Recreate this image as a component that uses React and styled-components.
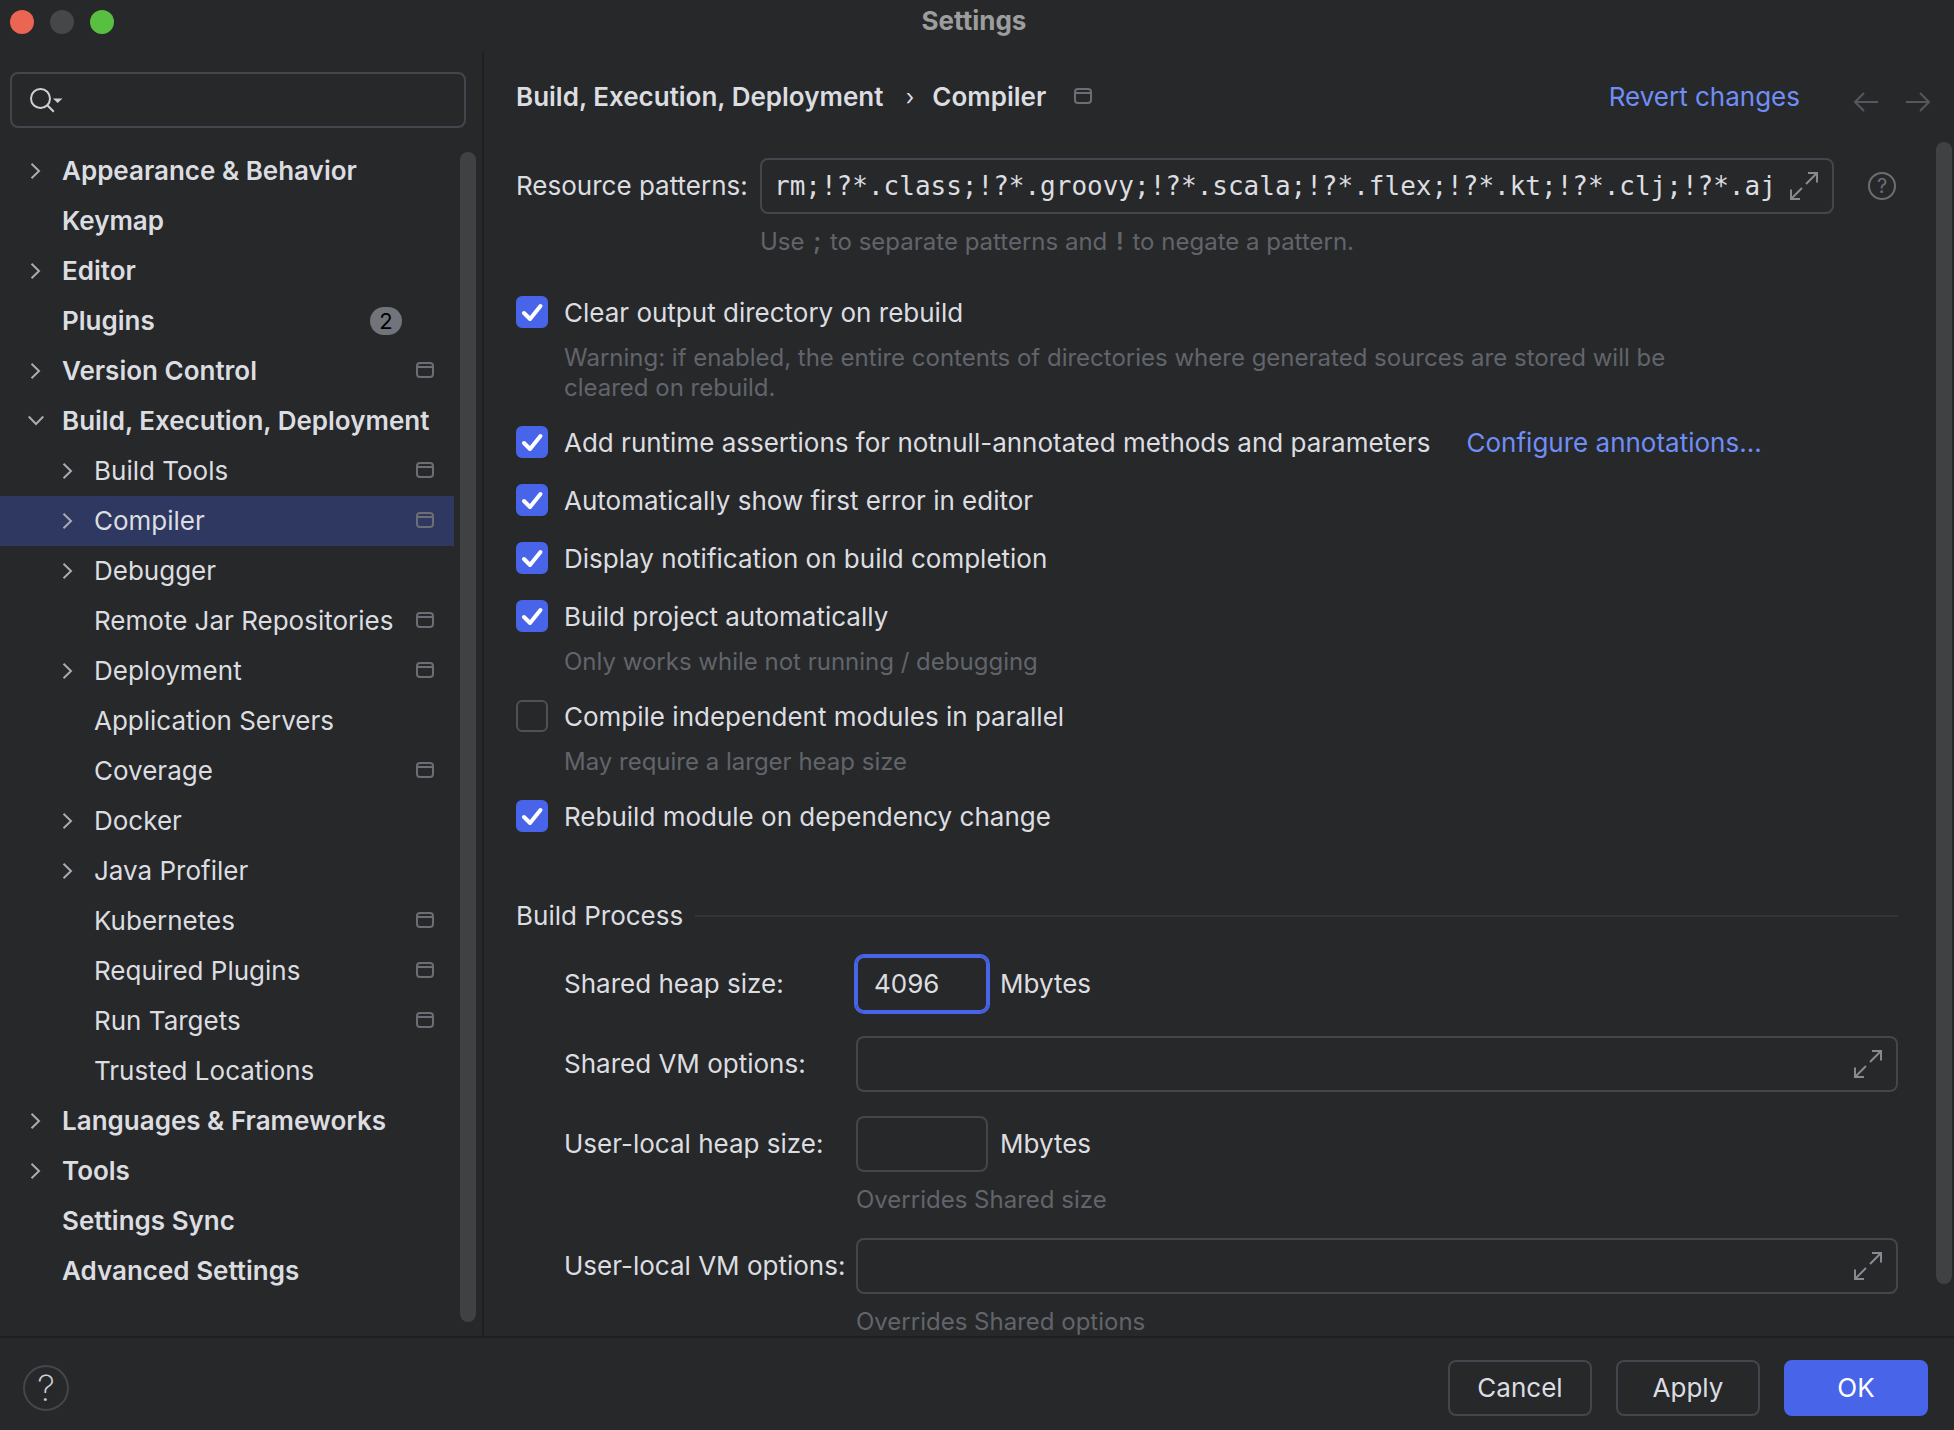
import React, { useState } from "react";
import styled, { createGlobalStyle, css } from "styled-components";

const TREE = [
  { label: "Appearance & Behavior", arrow: "right" },
  { label: "Keymap" },
  { label: "Editor", arrow: "right" },
  { label: "Plugins", badge: 2 },
  { label: "Version Control", arrow: "right", project: true },
  { label: "Build, Execution, Deployment", arrow: "down" },
  { label: "Build Tools", child: true, arrow: "right", project: true },
  { label: "Compiler", child: true, arrow: "right", project: true },
  { label: "Debugger", child: true, arrow: "right" },
  { label: "Remote Jar Repositories", child: true, project: true },
  { label: "Deployment", child: true, arrow: "right", project: true },
  { label: "Application Servers", child: true },
  { label: "Coverage", child: true, project: true },
  { label: "Docker", child: true, arrow: "right" },
  { label: "Java Profiler", child: true, arrow: "right" },
  { label: "Kubernetes", child: true, project: true },
  { label: "Required Plugins", child: true, project: true },
  { label: "Run Targets", child: true, project: true },
  { label: "Trusted Locations", child: true },
  { label: "Languages & Frameworks", arrow: "right" },
  { label: "Tools", arrow: "right" },
  { label: "Settings Sync" },
  { label: "Advanced Settings" },
];

const OPTIONS = [
  {
    id: "clear",
    label: "Clear output directory on rebuild",
    hint: "Warning: if enabled, the entire contents of directories where generated sources are stored will be cleared on rebuild.",
    checked: true,
  },
  {
    id: "assertions",
    label: "Add runtime assertions for notnull-annotated methods and parameters",
    link: "Configure annotations...",
    checked: true,
  },
  { id: "first-error", label: "Automatically show first error in editor", checked: true },
  { id: "notify", label: "Display notification on build completion", checked: true },
  {
    id: "auto-build",
    label: "Build project automatically",
    hint: "Only works while not running / debugging",
    checked: true,
  },
  {
    id: "parallel",
    label: "Compile independent modules in parallel",
    hint: "May require a larger heap size",
    checked: false,
  },
  { id: "rebuild", label: "Rebuild module on dependency change", checked: true },
];

const ChevronIcon = ({ direction }) => (
  <svg width="16" height="16" viewBox="0 0 16 16" fill="none" stroke="#a9abb3" strokeWidth="2">
    {direction === "right" && <path d="M3.5 0.7 11 8l-7.500 7.300" />}
    {direction === "down" && <path d="M0.700 3.500 8 11l7.300-7.500" />}
  </svg>
);

const ProjectIcon = () => (
  <svg width="18" height="18" viewBox="0 0 18 18" fill="none" stroke="#6c6e75" strokeWidth="2">
    <rect x="1" y="1" width="16" height="14" rx="3" />
    <path d="M1 5h16" />
  </svg>
);

const SearchIcon = () => (
  <svg width="34" height="26" viewBox="0 0 34 26" fill="none" stroke="#ced0d6" strokeWidth="2">
    <circle cx="10.500" cy="11.500" r="9.500" />
    <path d="m17.300 18.300 6.500 6.500" />
    <path d="M23 11.500h9.500L27.700 16z" fill="#ced0d6" stroke="none" />
  </svg>
);

const ExpandIcon = () => (
  <svg width="28" height="28" viewBox="0 0 28 28" fill="none" stroke="#868a91" strokeWidth="2">
    <path d="M18 1H27v9.500M27 1 16 12M10 27H1v-9.500M1 27l11-11" />
  </svg>
);

const ArrowIcon = ({ flip }) => (
  <svg width="24" height="20" viewBox="0 0 24 20" fill="none" stroke="#55575c" strokeWidth="2">
    <path d={flip ? "M0 10h23M14 1l9 9-9 9" : "M24 10H1M10 1l-9 9 9 9"} />
  </svg>
);

const CheckMark = () => (
  <svg
    width="32"
    height="32"
    viewBox="0 0 32 32"
    fill="none"
    stroke="#fff"
    strokeWidth="4"
    strokeLinecap="round"
    strokeLinejoin="round"
  >
    <path d="m8 17 6 6L24.500 10" />
  </svg>
);

const Option = ({ option }) => {
  const [checked, setChecked] = useState(option.checked);

  return (
    <OptionItem>
      <OptionRow>
        <OptionLabel htmlFor={option.id}>
          <CheckBox>
            <input
              type="checkbox"
              id={option.id}
              checked={checked}
              onChange={() => setChecked(!checked)}
            />
            {checked && <CheckMark />}
          </CheckBox>
          {option.label}
        </OptionLabel>
        {option.link && <Link href="#annotations">{option.link}</Link>}
      </OptionRow>
      {option.hint && <OptionHint>{option.hint}</OptionHint>}
    </OptionItem>
  );
};

const App = () => {
  const [selected, setSelected] = useState("Compiler");
  const [patterns, setPatterns] = useState(
    "rm;!?*.class;!?*.groovy;!?*.scala;!?*.flex;!?*.kt;!?*.clj;!?*.aj"
  );
  const [heap, setHeap] = useState("4096");

  return (
    <Window>
      <GlobalStyle />
      <TitleBar>
        <Lights>
          <Light $color="#ea6552" aria-label="Close" />
          <Light $color="#464749" aria-label="Minimize" />
          <Light $color="#58c041" aria-label="Zoom" />
        </Lights>
        <WindowTitle>Settings</WindowTitle>
      </TitleBar>

      <Panes>
        <Sidebar>
          <Search>
            <SearchIcon />
            <input type="search" aria-label="Search settings" />
          </Search>
          <TreeArea>
            <Tree>
              {TREE.map((item) => (
                <li key={item.label}>
                  <TreeRow
                    $child={item.child}
                    $selected={selected === item.label}
                    onClick={() => setSelected(item.label)}
                  >
                    <ChevronIcon direction={item.arrow} />
                    <TreeText>{item.label}</TreeText>
                    {item.badge && <Badge>{item.badge}</Badge>}
                    {item.project && <ProjectIcon />}
                  </TreeRow>
                </li>
              ))}
            </Tree>
            <TreeThumb />
          </TreeArea>
        </Sidebar>

        <Main>
          <Header>
            <Crumbs>
              <span>Build, Execution, Deployment</span>
              <Separator>›</Separator>
              <span>Compiler</span>
            </Crumbs>
            <ProjectIcon />
            <Revert href="#revert">Revert changes</Revert>
            <History>
              <IconButton aria-label="Back">
                <ArrowIcon />
              </IconButton>
              <IconButton aria-label="Forward">
                <ArrowIcon flip />
              </IconButton>
            </History>
          </Header>

          <Scroller>
            <Content>
              <PatternGrid>
                <label htmlFor="patterns">Resource patterns:</label>
                <Field $mono>
                  <input
                    id="patterns"
                    value={patterns}
                    onChange={(e) => setPatterns(e.target.value)}
                  />
                  <IconButton aria-label="Expand">
                    <ExpandIcon />
                  </IconButton>
                </Field>
                <SmallHelp aria-label="Pattern help">?</SmallHelp>
                <FieldHint>
                  Use <b>;</b> to separate patterns and <b>!</b> to negate a pattern.
                </FieldHint>
              </PatternGrid>

              <Options>
                {OPTIONS.map((option) => (
                  <Option key={option.id} option={option} />
                ))}
              </Options>

              <SectionTitle>Build Process</SectionTitle>

              <Form>
                <FormRow>
                  <label htmlFor="shared-heap">Shared heap size:</label>
                  <SizeGroup>
                    <Field $small $active>
                      <input
                        id="shared-heap"
                        value={heap}
                        onChange={(e) => setHeap(e.target.value)}
                      />
                    </Field>
                    Mbytes
                  </SizeGroup>
                </FormRow>
                <FormRow>
                  <label htmlFor="shared-vm">Shared VM options:</label>
                  <Field>
                    <input id="shared-vm" />
                    <IconButton aria-label="Expand">
                      <ExpandIcon />
                    </IconButton>
                  </Field>
                </FormRow>
                <FormRow>
                  <label htmlFor="local-heap">User-local heap size:</label>
                  <SizeGroup>
                    <Field $small>
                      <input id="local-heap" />
                    </Field>
                    Mbytes
                  </SizeGroup>
                  <FieldHint>Overrides Shared size</FieldHint>
                </FormRow>
                <FormRow>
                  <label htmlFor="local-vm">User-local VM options:</label>
                  <Field>
                    <input id="local-vm" />
                    <IconButton aria-label="Expand">
                      <ExpandIcon />
                    </IconButton>
                  </Field>
                  <FieldHint>Overrides Shared options</FieldHint>
                </FormRow>
              </Form>
            </Content>
            <MainThumb />
          </Scroller>
        </Main>
      </Panes>

      <Footer>
        <Help aria-label="Help">?</Help>
        <Button>Cancel</Button>
        <Button>Apply</Button>
        <Button $primary>OK</Button>
      </Footer>
    </Window>
  );
};

export default App;

// Styled Components
const GlobalStyle = createGlobalStyle`
  * {
    box-sizing: border-box;
  }
  body {
    margin: 0;
    background: #27282a;
    color: #dcdde0;
    font-family: Inter, "Liberation Sans", sans-serif;
    font-size: 26px;
    line-height: 32px;
  }
  button, input {
    margin: 0;
    padding: 0;
    border: none;
    background: none;
    color: inherit;
    font: inherit;
    outline: none;
  }
  svg {
    display: block;
    flex-shrink: 0;
  }
`;

const Window = styled.div`
  display: flex;
  flex-direction: column;
  height: 100vh;
`;

const TitleBar = styled.header`
  display: grid;
  grid-template-columns: 1fr auto 1fr;
  height: 52px;
  padding: 0 16px 0 10px;
`;

const Lights = styled.div`
  display: flex;
  gap: 16px;
  padding-top: 10px;
`;

const Light = styled.button`
  width: 24px;
  height: 24px;
  border-radius: 50%;
  background: ${(props) => props.$color};
`;

const WindowTitle = styled.h1`
  margin: 0;
  padding-top: 5px;
  font-size: 26px;
  font-weight: 700;
  color: #9d9d9e;
`;

const Panes = styled.div`
  display: flex;
  flex: 1;
  min-height: 0;
`;

const Sidebar = styled.nav`
  display: flex;
  flex-direction: column;
  flex: 0 0 484px;
  min-width: 0;
  border-right: 2px solid #1e1f21;
`;

const Search = styled.label`
  display: flex;
  align-items: center;
  flex-shrink: 0;
  height: 56px;
  margin: 20px 16px 18px 10px;
  padding: 0 18px;
  border: 2px solid #45464d;
  border-radius: 8px;
  input {
    flex: 1;
    width: 100%;
    min-width: 0;
  }
`;

const TreeArea = styled.div`
  display: flex;
  flex: 1;
  min-height: 0;
`;

const Tree = styled.ul`
  flex: 1;
  min-width: 0;
  margin: 0 6px 0 0;
  padding: 0;
  list-style: none;
`;

const TreeRow = styled.button`
  display: flex;
  align-items: center;
  gap: 18px;
  width: 100%;
  height: 50px;
  padding: 0 20px 0 ${(props) => (props.$child ? 60 : 28)}px;
  font-weight: ${(props) => (props.$child ? 400 : 600)};
  text-align: left;
  white-space: nowrap;
  background: ${(props) => (props.$selected ? "#2f3861" : "none")};
`;

const TreeText = styled.span`
  flex: 1;
  min-width: 0;
`;

const Badge = styled.span`
  width: 32px;
  height: 28px;
  margin-right: 32px;
  border-radius: 14px;
  background: #72747c;
  color: #000;
  font-size: 22px;
  font-weight: 400;
  line-height: 28px;
  text-align: center;
`;

const Thumb = styled.div`
  flex: 0 0 16px;
  border-radius: 8px;
  background: #404143;
`;

const TreeThumb = styled(Thumb)`
  margin: 6px 6px 14px 0;
`;

const MainThumb = styled(Thumb)`
  margin: 0 2px 52px 38px;
`;

const Main = styled.main`
  display: flex;
  flex-direction: column;
  flex: 1;
  min-width: 0;
  padding-left: 32px;
`;

const Header = styled.div`
  display: flex;
  align-items: center;
  flex-shrink: 0;
  height: 90px;
  padding-right: 24px;
`;

const Crumbs = styled.h2`
  display: flex;
  margin: 0 28px 0 0;
  font-size: 26px;
  font-weight: 600;
  white-space: nowrap;
`;

const Separator = styled.span`
  width: 49px;
  padding-left: 4px;
  font-size: 22px;
  font-weight: 400;
  text-align: center;
`;

const Link = styled.a`
  color: #6f8ef6;
  text-decoration: none;
  white-space: nowrap;
`;

const Revert = styled(Link)`
  margin-left: auto;
`;

const History = styled.div`
  display: flex;
  gap: 28px;
  margin-left: 54px;
  padding-top: 10px;
`;

const IconButton = styled.button`
  flex-shrink: 0;
`;

const Scroller = styled.div`
  display: flex;
  flex: 1;
  min-height: 0;
`;

const Content = styled.div`
  flex: 1;
  min-width: 0;
  padding-top: 16px;
  overflow: hidden;
`;

const PatternGrid = styled.div`
  display: grid;
  grid-template-columns: 244px 1fr 28px;
  align-items: center;
  padding-right: 2px;
`;

const Field = styled.div`
  display: flex;
  align-items: center;
  height: 56px;
  padding: 0 14px 0 12px;
  border: 2px solid #45464d;
  border-radius: 8px;
  input {
    flex: 1;
    width: 100%;
    min-width: 0;
  }
  ${(props) =>
    props.$mono &&
    css`
      margin-right: 34px;
      font-family: "DejaVu Sans Mono", monospace;
    `}
  ${(props) =>
    props.$small &&
    css`
      width: 132px;
      padding: 0 16px;
    `}
  ${(props) =>
    props.$active &&
    css`
      border-color: #4865e9;
      box-shadow: 0 0 0 2px #4865e9;
    `}
`;

const Hint = styled.p`
  margin: 13px 0 -1px;
  color: #62646b;
  font-size: 24px;
  line-height: 30px;
`;

const FieldHint = styled(Hint)`
  grid-column: 2;
  margin-top: 13px;
  b {
    padding: 0 2px;
    font-weight: 600;
  }
`;

const OptionHint = styled(Hint)`
  max-width: 1160px;
  margin-left: 48px;
`;

const SmallHelp = styled.button`
  width: 28px;
  height: 28px;
  border: 2px solid #6c6e75;
  border-radius: 50%;
  color: #6c6e75;
  font-size: 20px;
  line-height: 24px;
`;

const Options = styled.ul`
  display: flex;
  flex-direction: column;
  gap: 24px;
  margin: 40px 0 0;
  padding: 0;
  list-style: none;
`;

const OptionItem = styled.li`
  line-height: 34px;
`;

const OptionRow = styled.div`
  display: flex;
  gap: 36px;
`;

const OptionLabel = styled.label`
  display: flex;
  align-items: flex-start;
  gap: 16px;
`;

const CheckBox = styled.span`
  display: grid;
  input,
  svg {
    grid-area: 1 / 1;
  }
  svg {
    pointer-events: none;
  }
  input {
    appearance: none;
    width: 32px;
    height: 32px;
    border: 2px solid #505157;
    border-radius: 6px;
  }
  input:checked {
    border-color: #4865e9;
    background: #4865e9;
  }
`;

const SectionTitle = styled.h3`
  display: flex;
  align-items: center;
  gap: 12px;
  margin: 66px 0 24px;
  font-size: 26px;
  font-weight: 400;
  &::after {
    content: "";
    flex: 1;
    height: 2px;
    background: #333437;
  }
`;

const Form = styled.div`
  display: flex;
  flex-direction: column;
  gap: 24px;
  padding-left: 48px;
`;

const FormRow = styled.div`
  display: grid;
  grid-template-columns: 292px 1fr;
  align-items: center;
`;

const SizeGroup = styled.div`
  display: flex;
  align-items: center;
  gap: 12px;
`;

const Footer = styled.footer`
  display: flex;
  align-items: center;
  gap: 24px;
  flex-shrink: 0;
  height: 94px;
  padding: 8px 26px 0 23px;
  border-top: 2px solid #1e1f21;
`;

const Help = styled.button`
  width: 46px;
  height: 46px;
  margin-right: auto;
  border: 2px solid #45464d;
  border-radius: 50%;
  color: #ced0d6;
  font-size: 36px;
  font-weight: 200;
  line-height: 42px;
`;

const Button = styled.button`
  width: 144px;
  height: 56px;
  border: 2px solid ${(props) => (props.$primary ? "#4865e9" : "#45464d")};
  border-radius: 8px;
  background: ${(props) => (props.$primary ? "#4865e9" : "none")};
  color: ${(props) => (props.$primary ? "#fff" : "inherit")};
`;
